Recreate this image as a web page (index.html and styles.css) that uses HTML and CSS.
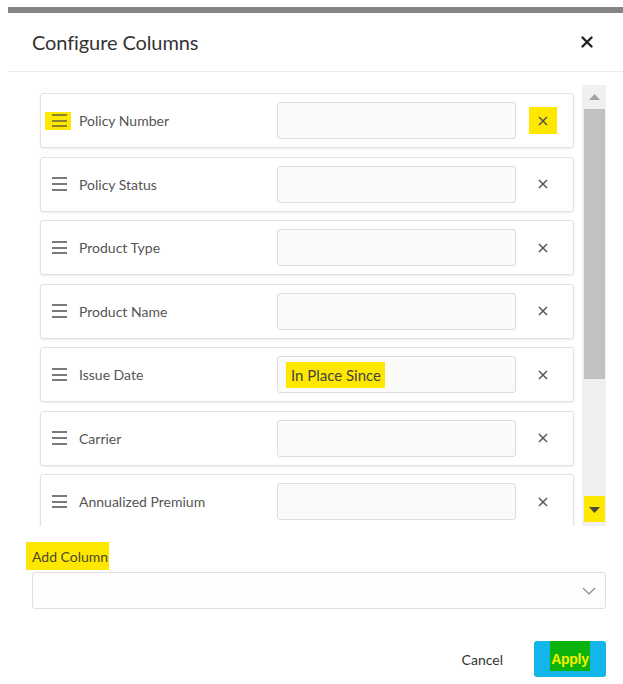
FILE: index.html
```html
<!DOCTYPE html>
<html lang="en">
<head>
<meta charset="utf-8">
<title>Configure Columns</title>
<link rel="stylesheet" href="styles.css">
</head>
<body>
<div class="modal">
  <header class="modal-header">
    <h2 class="modal-title">Configure Columns</h2>
    <button class="close-btn" aria-label="Close">
      <svg width="12" height="12" viewBox="0 0 12 12"><path d="M1.5 1.5 L10.5 10.5 M10.5 1.5 L1.5 10.5" stroke="#222" stroke-width="2.4" stroke-linecap="round"/></svg>
    </button>
  </header>

  <div class="modal-body">
    <div class="list-wrap">
      <ul class="column-list">
        <li class="column-row">
          <span class="handle mark"><i></i><i></i><i></i></span>
          <span class="column-name">Policy Number</span>
          <div class="alias-input"></div>
          <button class="remove-btn mark" aria-label="Remove"><svg width="10" height="10" viewBox="0 0 10 10"><path d="M1 1 L9 9 M9 1 L1 9" stroke="#555" stroke-width="1.5"/></svg></button>
        </li>
        <li class="column-row">
          <span class="handle"><i></i><i></i><i></i></span>
          <span class="column-name">Policy Status</span>
          <div class="alias-input"></div>
          <button class="remove-btn" aria-label="Remove"><svg width="10" height="10" viewBox="0 0 10 10"><path d="M1 1 L9 9 M9 1 L1 9" stroke="#555" stroke-width="1.5"/></svg></button>
        </li>
        <li class="column-row">
          <span class="handle"><i></i><i></i><i></i></span>
          <span class="column-name">Product Type</span>
          <div class="alias-input"></div>
          <button class="remove-btn" aria-label="Remove"><svg width="10" height="10" viewBox="0 0 10 10"><path d="M1 1 L9 9 M9 1 L1 9" stroke="#555" stroke-width="1.5"/></svg></button>
        </li>
        <li class="column-row">
          <span class="handle"><i></i><i></i><i></i></span>
          <span class="column-name">Product Name</span>
          <div class="alias-input"></div>
          <button class="remove-btn" aria-label="Remove"><svg width="10" height="10" viewBox="0 0 10 10"><path d="M1 1 L9 9 M9 1 L1 9" stroke="#555" stroke-width="1.5"/></svg></button>
        </li>
        <li class="column-row">
          <span class="handle"><i></i><i></i><i></i></span>
          <span class="column-name">Issue Date</span>
          <div class="alias-input"><span class="alias-value mark">In Place Since</span></div>
          <button class="remove-btn" aria-label="Remove"><svg width="10" height="10" viewBox="0 0 10 10"><path d="M1 1 L9 9 M9 1 L1 9" stroke="#555" stroke-width="1.5"/></svg></button>
        </li>
        <li class="column-row">
          <span class="handle"><i></i><i></i><i></i></span>
          <span class="column-name">Carrier</span>
          <div class="alias-input"></div>
          <button class="remove-btn" aria-label="Remove"><svg width="10" height="10" viewBox="0 0 10 10"><path d="M1 1 L9 9 M9 1 L1 9" stroke="#555" stroke-width="1.5"/></svg></button>
        </li>
        <li class="column-row">
          <span class="handle"><i></i><i></i><i></i></span>
          <span class="column-name">Annualized Premium</span>
          <div class="alias-input"></div>
          <button class="remove-btn" aria-label="Remove"><svg width="10" height="10" viewBox="0 0 10 10"><path d="M1 1 L9 9 M9 1 L1 9" stroke="#555" stroke-width="1.5"/></svg></button>
        </li>
      </ul>
      <div class="scrollbar">
        <div class="sb-arrow"><svg width="11" height="6" viewBox="0 0 11 6"><path d="M0 6 L5.5 0 L11 6 Z" fill="#a3a3a3"/></svg></div>
        <div class="sb-track"><div class="sb-thumb"></div></div>
        <div class="sb-arrow sb-down mark"><svg width="11" height="6" viewBox="0 0 11 6"><path d="M0 0 L11 0 L5.5 6 Z" fill="#4a4a3a"/></svg></div>
      </div>
    </div>

    <div class="add-column">
      <label class="add-label"><span class="mark">Add Column</span></label>
      <div class="select-box">
        <svg class="chevron" width="14" height="8" viewBox="0 0 14 8"><path d="M1 1 L7 7 L13 1" fill="none" stroke="#888" stroke-width="1.2"/></svg>
      </div>
    </div>
  </div>

  <footer class="modal-footer">
    <button class="btn-cancel">Cancel</button>
    <button class="btn-apply"><span class="apply-text">Apply</span></button>
  </footer>
</div>
</body>
</html>
```

FILE: styles.css
```css
* { box-sizing: border-box; }

html, body {
  margin: 0;
  padding: 0;
  background: #fff;
}

body {
  font-family: Lato, "Open Sans", Arial, sans-serif;
  color: #333;
}

button {
  font-family: inherit;
  border: none;
  background: none;
  padding: 0;
  cursor: pointer;
}

.mark { background: #ffe800; }

.modal {
  margin: 7px 0 0 8px;
  border-top: 6px solid #858585;
  background: #fff;
  width: 615px;
}

.modal-header {
  height: 59px;
  display: flex;
  align-items: center;
  justify-content: space-between;
  padding: 0 30px 0 24px;
  border-bottom: 1px solid #ececec;
}

.modal-title {
  margin: 0;
  font-size: 20px;
  font-weight: 400;
  color: #333;
  letter-spacing: -0.1px;
}

.close-btn {
  display: flex;
  width: 12px;
  height: 12px;
}

.modal-body {
  padding: 13px 17px 0 24px;
}

.list-wrap {
  display: flex;
  height: 441px;
}

.column-list {
  flex: 1;
  list-style: none;
  margin: 0;
  padding: 8px 8px 0 8px;
  overflow: hidden;
  display: flex;
  flex-direction: column;
  gap: 8.5px;
}

.column-row {
  flex: none;
  height: 55px;
  display: flex;
  align-items: center;
  border: 1px solid #e2e2e2;
  border-radius: 3px;
  box-shadow: 0 1px 2px rgba(0, 0, 0, 0.08);
  padding-left: 4px;
  background: #fff;
}

.handle {
  width: 26px;
  height: 18px;
  display: flex;
  flex-direction: column;
  justify-content: center;
  align-items: center;
  gap: 3.7px;
  padding-left: 3px;
}

.handle i {
  display: block;
  width: 15px;
  height: 2px;
  background: #7a7a7a;
}

.handle.mark i { background: #8a8430; }

.column-name {
  flex: 1;
  margin-left: 8px;
  font-size: 14px;
  color: #555;
}

.alias-input {
  width: 239px;
  height: 37px;
  border: 1px solid #dedede;
  border-radius: 3px;
  background: #fafafa;
  display: flex;
  align-items: center;
  padding-left: 8px;
}

.alias-value {
  font-size: 15px;
  color: #444;
  padding: 3px 4px 3px 5px;
  line-height: 20px;
}

.remove-btn {
  width: 28px;
  height: 27px;
  margin: 0 16px 0 13px;
  display: flex;
  align-items: center;
  justify-content: center;
}

.scrollbar {
  width: 24px;
  background: #f0f0f0;
  display: flex;
  flex-direction: column;
  padding: 0 1px 4px 2px;
}

.sb-arrow {
  height: 24px;
  display: flex;
  align-items: center;
  justify-content: center;
}

.sb-track {
  flex: 1;
  display: flex;
  flex-direction: column;
}

.sb-thumb {
  height: 270px;
  background: #c1c1c1;
}

.sb-down {
  height: 26px;
  padding-top: 2px;
}

.add-column {
  margin-top: 16px;
}

.add-label {
  display: block;
  margin-left: -6px;
}

.add-label span {
  display: inline-block;
  font-size: 14px;
  color: #4a4a2a;
  padding: 5px 1px 4px 6px;
  line-height: 19px;
}

.select-box {
  margin-top: 2px;
  height: 37px;
  border: 1px solid #e0e0e0;
  border-radius: 3px;
  background: #fdfdfd;
  display: flex;
  align-items: center;
  justify-content: flex-end;
  padding-right: 9px;
}

.modal-footer {
  display: flex;
  justify-content: flex-end;
  align-items: center;
  gap: 31px;
  padding: 32px 17px 0 0;
}

.btn-cancel {
  font-size: 14px;
  color: #333;
  height: 36px;
}

.btn-apply {
  width: 72px;
  height: 36px;
  background: #12b6e8;
  border-radius: 3px;
  display: flex;
  justify-content: center;
  align-items: flex-start;
}

.apply-text {
  display: block;
  background: #0db30d;
  width: 40px;
  height: 30px;
  line-height: 36px;
  font-family: "Liberation Sans", Arial, sans-serif;
  font-weight: 700;
  font-size: 14px;
  color: #f2f200;
  text-align: center;
  letter-spacing: -0.3px;
}
```
